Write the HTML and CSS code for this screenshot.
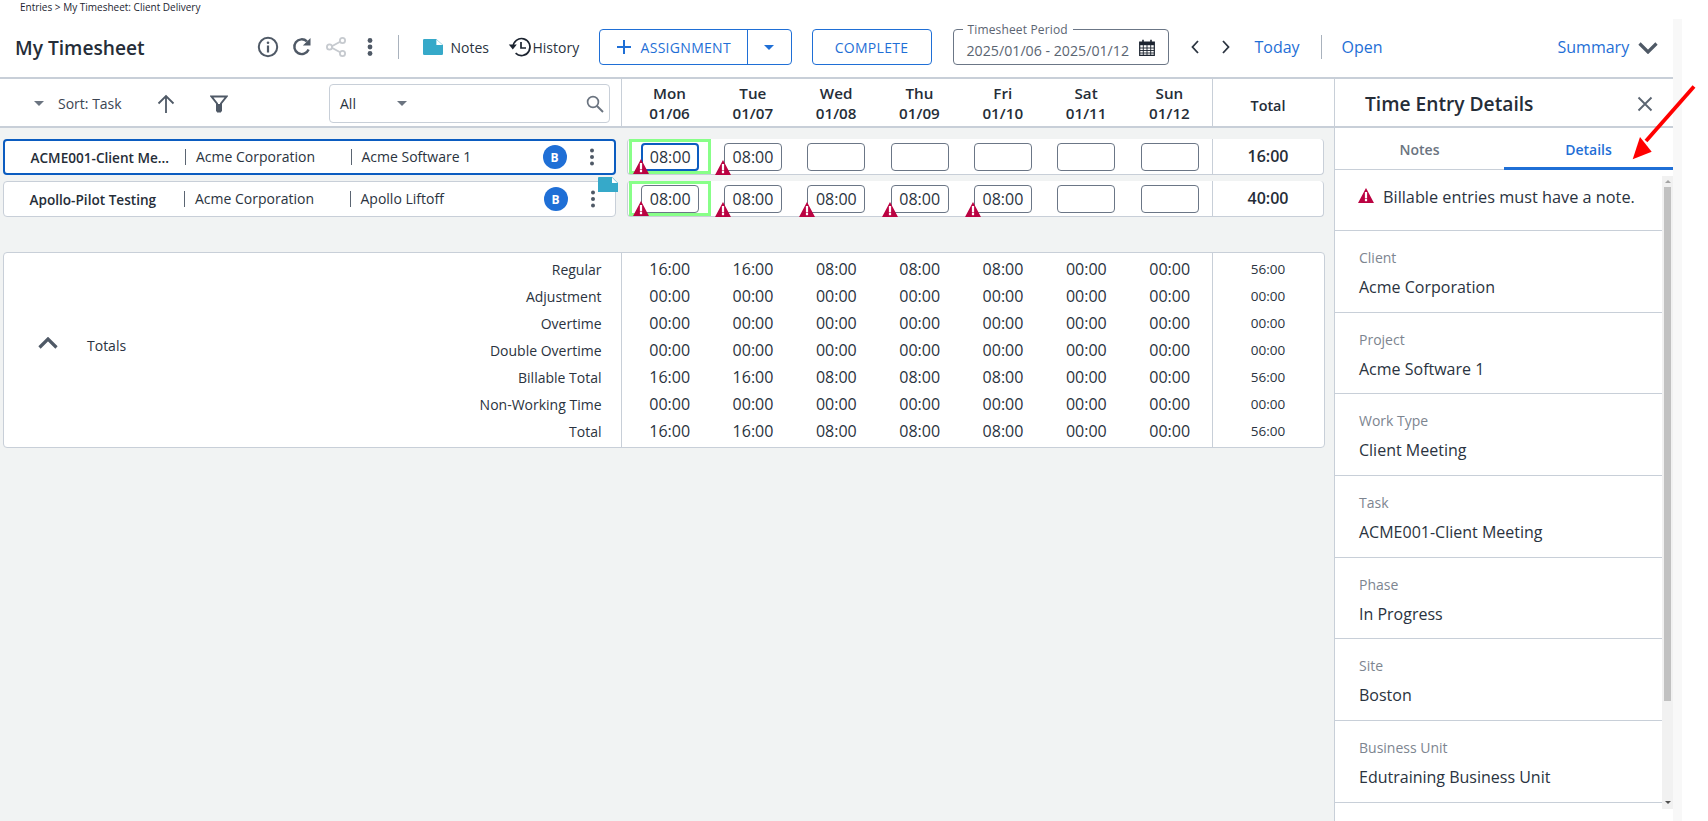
FILE: index.html
```html
<!DOCTYPE html>
<html lang="en">
<head>
<meta charset="utf-8">
<title>My Timesheet</title>
<link rel="stylesheet" href="styles.css">
</head>
<body>
<div class="page">
  <div class="app">
    <div class="crumb">Entries &gt; My Timesheet: Client Delivery</div>
    <header class="head">
      <h1 class="title">My Timesheet</h1>
      <div class="head-icons">
        <svg class="ic" viewBox="0 0 24 24"><circle cx="12" cy="12" r="9.2" fill="none" stroke="#4f5966" stroke-width="2"/><circle cx="12" cy="7.8" r="1.3" fill="#4f5966"/><rect x="10.9" y="10.5" width="2.2" height="7" fill="#4f5966"/></svg>
        <svg class="ic" viewBox="0 0 24 24"><path d="M18.6 14.5A7.4 7.4 0 1 1 16.9 6.4" fill="none" stroke="#4f5966" stroke-width="2.4"/><path d="M20.5 3v7.6h-7.6z" fill="#4f5966"/></svg>
        <svg class="ic" viewBox="0 0 24 24"><path d="M17.5 6L6.5 12l11 6" fill="none" stroke="#c6cacf" stroke-width="1.8"/><circle cx="18.5" cy="5.5" r="2.6" fill="#fff" stroke="#c6cacf" stroke-width="1.8"/><circle cx="5.5" cy="12" r="2.6" fill="#fff" stroke="#c6cacf" stroke-width="1.8"/><circle cx="18.5" cy="18.5" r="2.6" fill="#fff" stroke="#c6cacf" stroke-width="1.8"/></svg>
        <svg class="ic" viewBox="0 0 24 24"><circle cx="12" cy="5.5" r="2.4" fill="#4f5966"/><circle cx="12" cy="12" r="2.4" fill="#4f5966"/><circle cx="12" cy="18.5" r="2.4" fill="#4f5966"/></svg>
      </div>
      <span class="vsep sep-a"></span>
      <svg class="note-ic" viewBox="0 0 20 16"><path d="M1.2 0H13.2L20 6V14.8A1.2 1.2 0 0 1 18.8 16H1.2A1.2 1.2 0 0 1 0 14.8V1.2A1.2 1.2 0 0 1 1.2 0z" fill="#36a9c9"/><path d="M13.4 .6V6H19.6z" fill="#fff"/></svg>
      <span class="hlabel notes-l">Notes</span>
      <svg class="hist-ic" viewBox="0 0 24 24"><path d="M5 12a8.5 8.5 0 1 1 2.6 6.2" fill="none" stroke="#1c2430" stroke-width="1.6"/><path d="M0.8 9.6h8L4.8 14.6z" fill="#1c2430"/><path d="M13 7v6h5" fill="none" stroke="#1c2430" stroke-width="1.7"/></svg>
      <span class="hlabel hist-l">History</span>
      <div class="btn-split">
        <span class="btn-main"><svg class="plus" viewBox="0 0 16 16"><path d="M8 1v14M1 8h14" stroke="#1f6fd6" stroke-width="2"/></svg>ASSIGNMENT</span>
        <span class="btn-drop"><span class="caret caret-blue"></span></span>
      </div>
      <div class="btn-complete">COMPLETE</div>
      <div class="period">
        <span class="legend">Timesheet Period</span>
        <span class="period-val">2025/01/06 - 2025/01/12</span>
        <svg class="cal" viewBox="0 0 16 17"><path d="M0.7 3h14.6v13.3H0.7z" fill="#fff" stroke="#1c2430" stroke-width="1.2"/><path d="M0.7 3h14.6v3.2H0.7z" fill="#1c2430"/><path d="M4 .8v3.4M12 .8v3.4" stroke="#1c2430" stroke-width="1.6"/><path d="M.7 9h14.6M.7 11.5h14.6M.7 14h14.6M4.3 6v10M8 6v10M11.7 6v10" stroke="#1c2430" stroke-width=".9"/></svg>
      </div>
      <svg class="chev chev-l" viewBox="0 0 10 16"><path d="M8 2L2.5 8 8 14" fill="none" stroke="#2b3440" stroke-width="1.8"/></svg>
      <svg class="chev chev-r" viewBox="0 0 10 16"><path d="M2 2l5.5 6L2 14" fill="none" stroke="#2b3440" stroke-width="1.8"/></svg>
      <a class="link today">Today</a>
      <span class="vsep sep-b"></span>
      <a class="link open">Open</a>
      <a class="link summary">Summary</a>
      <svg class="sum-chev" viewBox="0 0 20 12"><path d="M1.5 1.5L10 10l8.5-8.5" fill="none" stroke="#4f5966" stroke-width="3.2"/></svg>
    </header>
    <div class="body">
      <main class="main">
        <div class="toolbar">
          <div class="tool-left">
            <span class="caret caret-grey sort-caret"></span>
            <span class="sort">Sort: Task</span>
            <svg class="up" viewBox="0 0 18 20"><path d="M9 19V2M1.5 9.5L9 2l7.5 7.5" fill="none" stroke="#4f5966" stroke-width="1.8"/></svg>
            <svg class="filter" viewBox="0 0 18 18"><path d="M1.5 1.5h15L11 8.5v7H7v-7z" fill="none" stroke="#4f5966" stroke-width="2"/><path d="M7 9h4v8.5H7z" fill="#4f5966"/></svg>
            <div class="search">
              <span class="search-all">All</span>
              <span class="caret caret-grey search-caret"></span>
              <svg class="mag" viewBox="0 0 18 18"><circle cx="7" cy="7" r="5.4" fill="none" stroke="#6b7480" stroke-width="1.7"/><path d="M11 11l6 6" stroke="#6b7480" stroke-width="2"/></svg>
            </div>
          </div>
          <div class="days">
            <div class="day">Mon<br>01/06</div>
            <div class="day">Tue<br>01/07</div>
            <div class="day">Wed<br>01/08</div>
            <div class="day">Thu<br>01/09</div>
            <div class="day">Fri<br>01/10</div>
            <div class="day">Sat<br>01/11</div>
            <div class="day">Sun<br>01/12</div>
          </div>
          <div class="day-total">Total</div>
        </div>

        <div class="rows">
          <div class="row">
            <div class="task task-active">
              <span class="task-name">ACME001-Client Me...</span>
              <span class="task-client">Acme Corporation</span>
              <span class="task-proj">Acme Software 1</span>
              <span class="badge">B</span>
              <svg class="kebab" viewBox="0 0 6 20"><circle cx="3" cy="3.5" r="2" fill="#4f5966"/><circle cx="3" cy="10" r="2" fill="#4f5966"/><circle cx="3" cy="16.5" r="2" fill="#4f5966"/></svg>
            </div>
            <div class="cells">
              <div class="cell cell-green"><span class="inp inp-focus">08:00</span><svg class="warn" viewBox="0 0 16 15"><path d="M8 0l8 15H0z" fill="#bb0342"/><rect x="6.9" y="4" width="2.2" height="6.4" fill="#fff"/><rect x="6.9" y="11" width="2.2" height="2.2" fill="#fff"/></svg></div>
              <div class="cell"><span class="inp">08:00</span><svg class="warn" viewBox="0 0 16 15"><path d="M8 0l8 15H0z" fill="#bb0342"/><rect x="6.9" y="4" width="2.2" height="6.4" fill="#fff"/><rect x="6.9" y="11" width="2.2" height="2.2" fill="#fff"/></svg></div>
              <div class="cell"><span class="inp"></span></div>
              <div class="cell"><span class="inp"></span></div>
              <div class="cell"><span class="inp"></span></div>
              <div class="cell"><span class="inp"></span></div>
              <div class="cell"><span class="inp"></span></div>
            </div>
            <div class="row-total">16:00</div>
          </div>
          <div class="row">
            <div class="task">
              <span class="task-name">Apollo-Pilot Testing</span>
              <span class="task-client">Acme Corporation</span>
              <span class="task-proj">Apollo Liftoff</span>
              <span class="badge">B</span>
              <svg class="kebab" viewBox="0 0 6 20"><circle cx="3" cy="3.5" r="2" fill="#4f5966"/><circle cx="3" cy="10" r="2" fill="#4f5966"/><circle cx="3" cy="16.5" r="2" fill="#4f5966"/></svg>
              <svg class="corner-note" viewBox="0 0 20 15"><path d="M0 1a1 1 0 0 1 1-1h13l6 6v9H0z" fill="#36a9c9"/><path d="M14 .6V6h5.4z" fill="#fff"/></svg>
            </div>
            <div class="cells">
              <div class="cell cell-green"><span class="inp">08:00</span><svg class="warn" viewBox="0 0 16 15"><path d="M8 0l8 15H0z" fill="#bb0342"/><rect x="6.9" y="4" width="2.2" height="6.4" fill="#fff"/><rect x="6.9" y="11" width="2.2" height="2.2" fill="#fff"/></svg></div>
              <div class="cell"><span class="inp">08:00</span><svg class="warn" viewBox="0 0 16 15"><path d="M8 0l8 15H0z" fill="#bb0342"/><rect x="6.9" y="4" width="2.2" height="6.4" fill="#fff"/><rect x="6.9" y="11" width="2.2" height="2.2" fill="#fff"/></svg></div>
              <div class="cell"><span class="inp">08:00</span><svg class="warn" viewBox="0 0 16 15"><path d="M8 0l8 15H0z" fill="#bb0342"/><rect x="6.9" y="4" width="2.2" height="6.4" fill="#fff"/><rect x="6.9" y="11" width="2.2" height="2.2" fill="#fff"/></svg></div>
              <div class="cell"><span class="inp">08:00</span><svg class="warn" viewBox="0 0 16 15"><path d="M8 0l8 15H0z" fill="#bb0342"/><rect x="6.9" y="4" width="2.2" height="6.4" fill="#fff"/><rect x="6.9" y="11" width="2.2" height="2.2" fill="#fff"/></svg></div>
              <div class="cell"><span class="inp">08:00</span><svg class="warn" viewBox="0 0 16 15"><path d="M8 0l8 15H0z" fill="#bb0342"/><rect x="6.9" y="4" width="2.2" height="6.4" fill="#fff"/><rect x="6.9" y="11" width="2.2" height="2.2" fill="#fff"/></svg></div>
              <div class="cell"><span class="inp"></span></div>
              <div class="cell"><span class="inp"></span></div>
            </div>
            <div class="row-total">40:00</div>
          </div>
        </div>

        <section class="totals">
          <div class="tot-left">
            <svg class="tot-chev" viewBox="0 0 20 12"><path d="M1.5 10.5L10 2l8.5 8.5" fill="none" stroke="#4f5966" stroke-width="3.2"/></svg>
            <span class="tot-title">Totals</span>
            <div class="tot-labels">
              <div>Regular</div><div>Adjustment</div><div>Overtime</div><div>Double Overtime</div><div>Billable Total</div><div>Non-Working Time</div><div>Total</div>
            </div>
          </div>
          <div class="tot-grid">
            <span>16:00</span><span>16:00</span><span>08:00</span><span>08:00</span><span>08:00</span><span>00:00</span><span>00:00</span>
            <span>00:00</span><span>00:00</span><span>00:00</span><span>00:00</span><span>00:00</span><span>00:00</span><span>00:00</span>
            <span>00:00</span><span>00:00</span><span>00:00</span><span>00:00</span><span>00:00</span><span>00:00</span><span>00:00</span>
            <span>00:00</span><span>00:00</span><span>00:00</span><span>00:00</span><span>00:00</span><span>00:00</span><span>00:00</span>
            <span>16:00</span><span>16:00</span><span>08:00</span><span>08:00</span><span>08:00</span><span>00:00</span><span>00:00</span>
            <span>00:00</span><span>00:00</span><span>00:00</span><span>00:00</span><span>00:00</span><span>00:00</span><span>00:00</span>
            <span>16:00</span><span>16:00</span><span>08:00</span><span>08:00</span><span>08:00</span><span>00:00</span><span>00:00</span>
          </div>
          <div class="tot-sum">
            <div>56:00</div><div>00:00</div><div>00:00</div><div>00:00</div><div>56:00</div><div>00:00</div><div>56:00</div>
          </div>
        </section>
      </main>

      <aside class="panel">
        <div class="panel-head">
          <h2 class="panel-title">Time Entry Details</h2>
          <svg class="close" viewBox="0 0 16 16"><path d="M1.5 1.5l13 13M14.5 1.5l-13 13" stroke="#5b6572" stroke-width="1.9"/></svg>
        </div>
        <div class="tabs">
          <div class="tab">Notes</div>
          <div class="tab tab-on">Details</div>
        </div>
        <div class="panel-body">
          <div class="fields">
            <div class="alert">
              <svg class="alert-ic" viewBox="0 0 16 15"><path d="M8 0l8 15H0z" fill="#bb0342"/><rect x="6.9" y="4" width="2.2" height="6.4" fill="#fff"/><rect x="6.9" y="11" width="2.2" height="2.2" fill="#fff"/></svg>
              <span>Billable entries must have a note.</span>
            </div>
            <div class="field"><div class="f-label">Client</div><div class="f-value">Acme Corporation</div></div>
            <div class="field"><div class="f-label">Project</div><div class="f-value">Acme Software 1</div></div>
            <div class="field"><div class="f-label">Work Type</div><div class="f-value">Client Meeting</div></div>
            <div class="field"><div class="f-label">Task</div><div class="f-value">ACME001-Client Meeting</div></div>
            <div class="field"><div class="f-label">Phase</div><div class="f-value">In Progress</div></div>
            <div class="field"><div class="f-label">Site</div><div class="f-value">Boston</div></div>
            <div class="field"><div class="f-label">Business Unit</div><div class="f-value">Edutraining Business Unit</div></div>
          </div>
          <div class="scroll">
            <span class="sb-up"></span>
            <span class="sb-thumb"></span>
            <span class="sb-down"></span>
          </div>
        </div>
      </aside>
    </div>
  </div>
  <div class="strip"></div>
  <svg class="annot" viewBox="0 0 80 80"><path d="M69 1.5L21 56" stroke="#f00" stroke-width="3.8"/><path d="M7.7 74.3L15 52l11.7 14.7z" fill="#f00"/></svg>
</div>
</body>
</html>
```
FILE: styles.css
```css
* { box-sizing: border-box; }
html, body { margin: 0; height: 821px; overflow: hidden; background: #fff; }
body { font-family: "Open Sans", "Liberation Sans", sans-serif; color: #2a3340; font-size: 14px; }

.page { display: flex; height: 821px; position: relative; }
.app { width: 1673px; height: 821px; display: flex; flex-direction: column; background: #f1f3f3; }
.strip { width: 9px; margin-top: 19px; background: #f8f8f8; }

.crumb { height: 19px; background: #fff; padding: 0 0 0 20px; font-size: 10px; line-height: 14px; color: #1c2430; }

/* header */
.head { height: 60px; flex: none; display: flex; align-items: center; background: #fff; border-bottom: 2px solid #c8cfd8; padding-bottom: 2px; }
.title { margin: 0 0 0 15px; width: 240.5px; font-size: 19.2px; font-weight: 600; color: #252d38; white-space: nowrap; }
.head-icons { display: flex; gap: 10px; width: 130px; }
.ic { width: 24px; height: 24px; display: block; }
.vsep { width: 1px; height: 24px; background: #a9b2bd; }
.sep-a { margin-left: 12px; }
.note-ic { width: 20px; height: 16px; margin-left: 24px; }
.hlabel { font-size: 14px; color: #2a3340; }
.notes-l { margin-left: 8px; width: 45px; }
.hist-ic { width: 24px; height: 24px; margin-left: 12px; }
.hist-l { margin-left: 1px; width: 66px; }

.btn-split { display: flex; width: 193px; height: 36px; border: 1px solid #1f6fd6; border-radius: 4px; color: #1f6fd6; font-size: 14px; letter-spacing: .3px; }
.btn-main { width: 148px; display: flex; align-items: center; padding-left: 16px; border-right: 1px solid #1f6fd6; }
.plus { width: 16px; height: 16px; margin-right: 9px; }
.btn-drop { flex: 1; display: flex; align-items: center; justify-content: center; }
.caret { display: inline-block; width: 0; height: 0; border-left: 5.5px solid transparent; border-right: 5.5px solid transparent; }
.caret-blue { border-top: 5px solid #1f6fd6; }
.caret-grey { border-top: 5px solid #6b7480; }

.btn-complete { width: 120px; height: 36px; margin-left: 20px; border: 1px solid #1f6fd6; border-radius: 4px; color: #1f6fd6; font-size: 14px; letter-spacing: .3px; display: flex; align-items: center; justify-content: center; }

.period { position: relative; width: 216px; height: 36px; margin-left: 21px; border: 1px solid #6b7686; border-radius: 4px; display: flex; align-items: center; padding: 7px 0 0 13px; }
.legend { position: absolute; left: 9px; top: -8px; padding: 0 5px; background: #fff; font-size: 12px; line-height: 15px; color: #5b6572; letter-spacing: .15px; }
.period-val { font-size: 14.2px; color: #5b6572; white-space: nowrap; width: 172px; }
.cal { width: 16px; height: 17px; margin-top: -7px; }

.chev { width: 10px; height: 16px; }
.chev-l { margin-left: 21px; }
.chev-r { margin-left: 21px; }
.link { color: #1f6fd6; font-size: 16px; }
.today { margin-left: 24px; width: 66px; }
.open { margin-left: 20px; width: 216px; }
.summary { width: 80px; }
.sum-chev { width: 20px; height: 12px; margin-top: 2px; }

.body { flex: 1; display: flex; min-height: 0; }
.main { width: 1334px; flex: none; }

/* toolbar */
.toolbar { height: 49px; background: #fff; border-bottom: 2px solid #c8cfd8; display: flex; }
.tool-left { width: 622px; flex: none; border-right: 1px solid #c8cfd8; display: flex; align-items: center; padding-top: 2px; }
.sort-caret { margin-left: 34px; }
.sort { margin-left: 14px; width: 99px; font-size: 14px; color: #3c4552; }
.up { width: 18px; height: 20px; }
.filter { width: 18px; height: 18px; margin-left: 35px; }
.search { margin-left: 101px; width: 281px; height: 39px; border: 1px solid #c8cfd8; border-radius: 4px; display: flex; align-items: center; padding-left: 10px; }
.search-all { width: 57px; color: #2a3340; font-size: 14px; }
.mag { width: 18px; height: 18px; margin-left: auto; margin-right: 5px; }

.days { display: grid; grid-template-columns: repeat(7, 83.33px); padding-left: 5.8px; width: 590.5px; flex: none; border-right: 1px solid #c8cfd8; }
.day { text-align: center; font-weight: 600; font-size: 15.2px; line-height: 20px; padding-top: 4px; color: #252d38; }
.day-total { width: 110px; text-align: center; font-weight: 600; font-size: 14.4px; line-height: 54px; color: #252d38; padding-left: 1px; }

/* rows */
.rows { padding: 11px 0 0 3px; display: flex; flex-direction: column; gap: 6px; }
.row { display: flex; height: 36px; }
.task { position: relative; width: 612.5px; flex: none; display: flex; align-items: center; background: #fff; border: 1px solid #c8cfd8; border-radius: 4px; padding-left: 25.5px; }
.task-active { border: 2px solid #0b5cc0; }
.task-name { width: 141px; font-weight: 600; font-size: 13.6px; color: #252d38; white-space: nowrap; }
.task-client { margin-left: 13.5px; width: 165.5px; border-left: 1px solid #5b6572; padding-left: 10px; line-height: 16px; white-space: nowrap; }
.task-proj { border-left: 1px solid #5b6572; padding-left: 10px; line-height: 16px; white-space: nowrap; }
.badge { margin-left: auto; width: 24px; height: 24px; border-radius: 50%; background: #1f6fd6; color: #fff; font-size: 12px; font-weight: 700; display: flex; align-items: center; justify-content: center; }
.kebab { width: 6px; height: 20px; margin: 0 19px 0 22px; }
.corner-note { position: absolute; right: -3px; top: -5px; width: 20px; height: 15px; }

.cells { margin-left: 11.5px; width: 585px; flex: none; display: grid; grid-template-columns: repeat(7, 83.33px); background: #fff; border-bottom: 1px solid #c8cfd8; border-left: 1px solid #c8cfd8; border-radius: 4px 0 0 4px; }
.cell { position: relative; display: flex; align-items: center; justify-content: center; }
.cell-green { margin: 0 0 0 1px; border: 3px solid #88ff88; }
.inp { width: 58px; height: 28px; background: #fff; border: 1px solid #6b7686; border-radius: 4px; font-size: 16px; line-height: 26px; text-align: center; color: #2a3340; }
.inp-focus { border: 2px solid #0b5cc0; line-height: 24px; }
.warn { position: absolute; left: 4px; bottom: -1px; width: 16px; height: 15px; }
.cell-green .warn { left: 1px; bottom: -3px; }
.row-total { width: 112px; flex: none; background: #fff; border: 1px solid #c8cfd8; border-top: 0; border-radius: 0 4px 4px 0; text-align: center; font-size: 16px; font-weight: 600; line-height: 35px; color: #252d38; }

/* totals */
.totals { margin: 35px 0 0 3px; width: 1321.5px; height: 196px; background: #fff; border: 1px solid #c8cfd8; border-radius: 4px; display: flex; }
.tot-left { width: 617.5px; flex: none; border-right: 1px solid #c8cfd8; display: flex; align-items: center; position: relative; }
.tot-chev { width: 20px; height: 12px; margin: -15px 0 0 34px; }
.tot-title { margin-left: 29px; margin-top: -10px; font-size: 14px; color: #2a3340; }
.tot-labels { margin-left: auto; padding: 3px 19px 0 0; text-align: right; align-self: stretch; font-size: 14px; color: #2a3340; }
.tot-labels div { height: 27px; line-height: 27px; }
.tot-grid { display: grid; grid-template-columns: repeat(7, 83.33px); grid-auto-rows: 27px; padding: 3px 0 0 6.5px; width: 591px; flex: none; border-right: 1px solid #c8cfd8; font-size: 16px; color: #2a3340; text-align: center; line-height: 27px; }
.tot-sum { flex: 1; padding-top: 3px; text-align: center; font-size: 13.5px; color: #2a3340; }
.tot-sum div { height: 27px; line-height: 27px; }

/* panel */
.panel { width: 339px; flex: none; background: #fff; border-left: 1px solid #c8cfd8; display: flex; flex-direction: column; }
.panel-head { height: 49px; flex: none; border-bottom: 2px solid #c8cfd8; display: flex; align-items: center; padding: 2px 20px 0 30px; }
.panel-title { margin: 0; font-size: 19.2px; font-weight: 600; color: #252d38; }
.close { width: 16px; height: 16px; margin-left: auto; margin-top: 1px; }
.tabs { height: 42px; flex: none; display: flex; border-bottom: 1px solid #c8cfd8; }
.tab { flex: 1; text-align: center; font-size: 14px; font-weight: 600; line-height: 43px; color: #6b7480; }
.tab-on { color: #1f6fd6; border-bottom: 3px solid #1f6fd6; height: 42px; }
.panel-body { flex: 1; display: flex; min-height: 0; }
.fields { flex: 1; }
.alert { height: 61px; border-bottom: 1px solid #c8cfd8; display: flex; align-items: flex-start; padding: 16px 0 0 23px; font-size: 16.3px; color: #2a3340; white-space: nowrap; }
.alert-ic { width: 16px; height: 15px; margin-right: 9px; margin-top: 2px; flex: none; }
.field { height: 81.67px; border-bottom: 1px solid #c8cfd8; padding: 17px 0 0 24px; }
.f-label { font-size: 14px; line-height: 20px; color: #7d8590; }
.f-value { font-size: 16px; line-height: 22px; margin-top: 8px; color: #2a3340; }
.scroll { width: 11px; flex: none; margin-top: 6px; height: 633px; background: #f1f1f1; display: flex; flex-direction: column; align-items: center; }
.sb-up { width: 0; height: 0; margin-top: 4px; border-left: 3px solid transparent; border-right: 3px solid transparent; border-bottom: 3px solid #a3a3a3; }
.sb-thumb { width: 7px; height: 514px; margin-top: 4px; background: #c1c1c1; }
.sb-down { width: 0; height: 0; margin-top: auto; margin-bottom: 5px; border-left: 3px solid transparent; border-right: 3px solid transparent; border-top: 3px solid #505050; }

/* red annotation arrow laid over the screenshot */
.annot { position: absolute; left: 1625px; top: 85px; width: 80px; height: 80px; }
```
